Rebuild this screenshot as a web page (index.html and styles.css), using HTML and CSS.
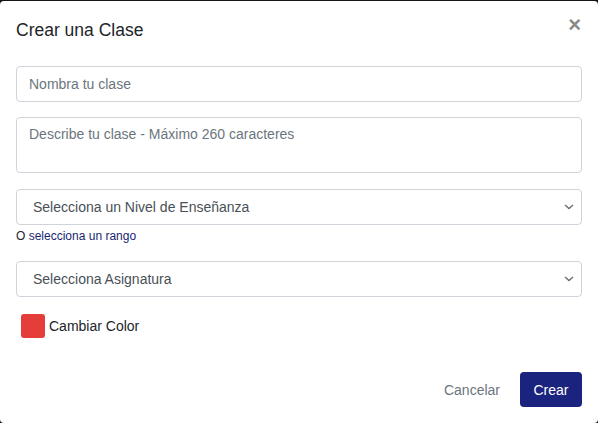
FILE: index.html
```html
<!DOCTYPE html>
<html lang="es">
<head>
<meta charset="utf-8">
<title>Crear una Clase</title>
<link rel="stylesheet" href="styles.css">
</head>
<body>
<div class="modal">
  <div class="modal-header">
    <h5 class="modal-title">Crear una Clase</h5>
    <button class="close" type="button" aria-label="Cerrar">&times;</button>
  </div>
  <div class="modal-body">
    <input class="form-control" type="text" placeholder="Nombra tu clase">
    <textarea class="form-control area" placeholder="Describe tu clase - Máximo 260 caracteres"></textarea>
    <div class="select-wrap">
      <select class="form-select">
        <option>Selecciona un Nivel de Enseñanza</option>
      </select>
      <svg class="chevron" width="10" height="6" viewBox="0 0 10 6"><path d="M1 1 L5 4.5 L9 1" fill="none" stroke="#6f6f6f" stroke-width="1.5"/></svg>
    </div>
    <div class="range-hint">O <a href="#" class="range-link">selecciona un rango</a></div>
    <div class="select-wrap second">
      <select class="form-select">
        <option>Selecciona Asignatura</option>
      </select>
      <svg class="chevron" width="10" height="6" viewBox="0 0 10 6"><path d="M1 1 L5 4.5 L9 1" fill="none" stroke="#6f6f6f" stroke-width="1.5"/></svg>
    </div>
    <div class="color-row">
      <span class="swatch"></span>
      <span class="color-label">Cambiar Color</span>
    </div>
  </div>
  <div class="modal-footer">
    <button class="btn-cancel" type="button">Cancelar</button>
    <button class="btn-primary" type="button">Crear</button>
  </div>
</div>
</body>
</html>
```
FILE: styles.css
```css
* { box-sizing: border-box; }
html, body { margin: 0; padding: 0; }
body {
  background: #141414;
  font-family: "Liberation Sans", Arial, sans-serif;
  color: #212529;
  width: 598px;
  height: 423px;
  overflow: hidden;
}
.modal {
  margin-top: 1px;
  height: 422px;
  background: #fff;
  border-radius: 4px;
  display: flex;
  flex-direction: column;
}
.modal-header {
  display: flex;
  justify-content: space-between;
  align-items: flex-start;
  padding: 14px 16px 0 16px;
}
.modal-title {
  margin: 0;
  font-size: 17.5px;
  font-weight: 400;
  line-height: 30px;
  color: #212529;
}
.close {
  border: 0;
  background: transparent;
  padding: 0;
  margin: 1px 1px 0 0;
  font-family: "Liberation Sans", Arial, sans-serif;
  font-size: 22px;
  font-weight: 700;
  line-height: 16px;
  color: #8a8a8a;
  height: 18px;
}
.modal-body {
  padding: 21px 16px 0 16px;
  display: flex;
  flex-direction: column;
}
.form-control, .form-select {
  display: block;
  width: 100%;
  height: 36px;
  border: 1px solid #ced4da;
  border-radius: 4px;
  padding: 0 12px;
  font-family: "Liberation Sans", Arial, sans-serif;
  font-size: 14px;
  color: #495057;
  background: #fff;
  margin: 0;
}
.form-control::placeholder { color: #6c757d; opacity: 1; }
.area {
  margin-top: 15px;
  height: 56px;
  padding: 8px 12px;
  resize: none;
  line-height: 17px;
}
.select-wrap {
  position: relative;
  margin-top: 16px;
}
.select-wrap.second { margin-top: 17px; }
.form-select {
  appearance: none;
  -webkit-appearance: none;
  padding: 0 30px 0 16px;
  color: #495057;
}
.chevron {
  position: absolute;
  right: 8px;
  top: 15px;
  pointer-events: none;
}
.range-hint {
  font-size: 12px;
  line-height: 16px;
  margin-top: 3px;
  color: #212529;
}
.range-link {
  color: #1a1f71;
  text-decoration: none;
}
.color-row {
  display: flex;
  align-items: center;
  margin-top: 17px;
  padding-left: 5px;
}
.swatch {
  width: 24px;
  height: 24px;
  border-radius: 3px;
  background: #e53e3a;
  margin-right: 4px;
}
.color-label {
  font-size: 14px;
  color: #212529;
}
.modal-footer {
  margin-top: auto;
  display: flex;
  justify-content: flex-end;
  align-items: center;
  padding: 0 16px 16px 16px;
}
.btn-cancel {
  border: 0;
  background: transparent;
  font-family: "Liberation Sans", Arial, sans-serif;
  font-size: 14px;
  color: #6c757d;
  padding: 0;
  margin-right: 20px;
}
.btn-primary {
  border: 0;
  background: #1a237e;
  color: #fff;
  font-family: "Liberation Sans", Arial, sans-serif;
  font-size: 14px;
  width: 62px;
  height: 35px;
  border-radius: 4px;
  padding: 0;
}
```
